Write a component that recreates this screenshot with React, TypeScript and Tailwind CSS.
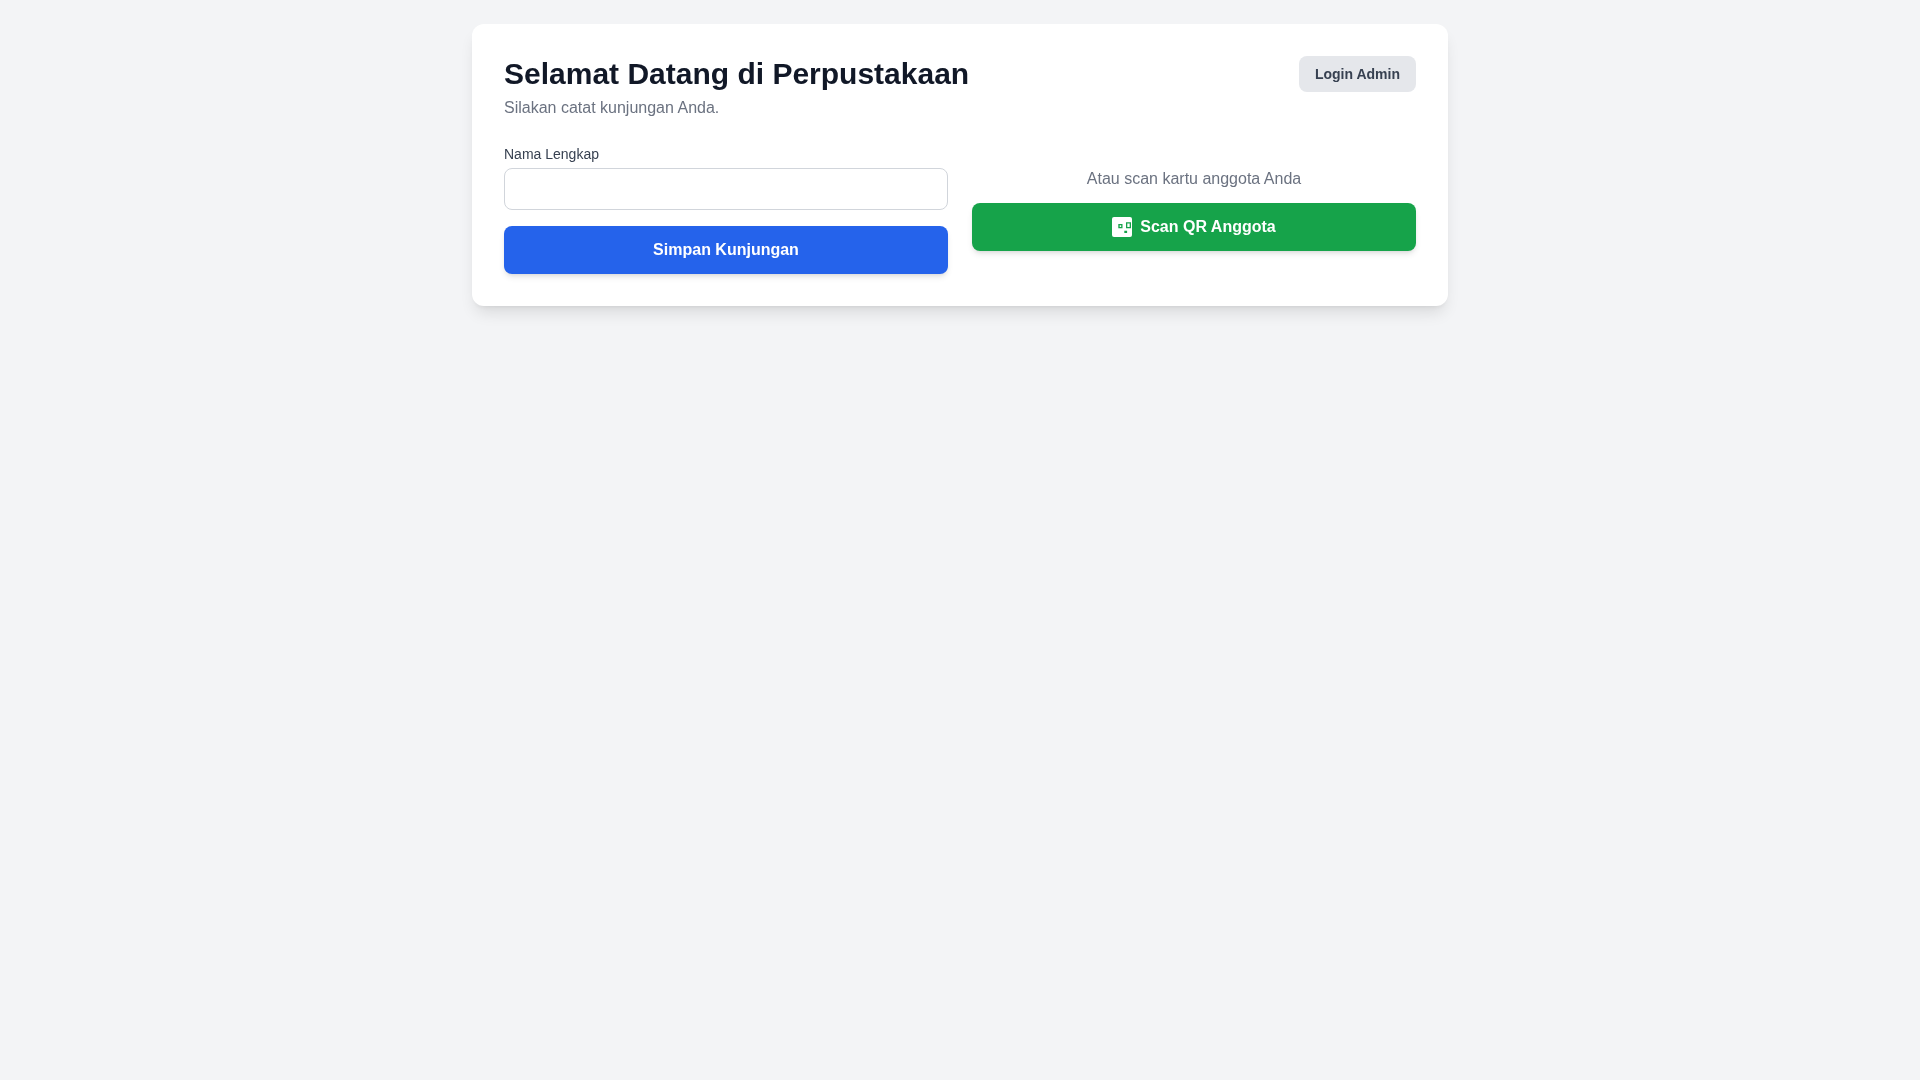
export default function App() {
  return (
    <div className="min-h-screen bg-[#f3f4f6] font-['Liberation_Sans',Arial,sans-serif]">
      <div className="max-w-5xl mx-auto p-6">
        <div className="bg-white rounded-xl shadow-lg p-8 transform-gpu">
          <div className="flex justify-between items-start mb-6">
            <div>
              <h1 className="text-3xl font-bold text-[#111827]">Selamat Datang di Perpustakaan</h1>
              <p className="mt-1 text-[#6b7280]">Silakan catat kunjungan Anda.</p>
            </div>
            <button className="bg-[#e5e7eb] text-[#374151] text-sm font-semibold px-4 py-2 rounded-lg">Login Admin</button>
          </div>
          <div className="grid grid-cols-2 gap-6 items-center">
            <div className="flex flex-col gap-4">
              <div>
                <label className="block text-sm font-medium text-[#374151] mb-1">Nama Lengkap</label>
                <input type="text" className="w-full border border-[#d1d5db] rounded-lg px-3 py-2 outline-none" />
              </div>
              <button className="w-full bg-[#2563eb] text-white font-bold py-3 rounded-lg shadow-md">Simpan Kunjungan</button>
            </div>
            <div className="text-center">
              <p className="text-[#6b7280] mb-3">Atau scan kartu anggota Anda</p>
              <button className="w-full bg-[#16a34a] text-white font-bold py-3 rounded-lg shadow-md flex items-center justify-center gap-2">
                <svg className="w-5 h-5" viewBox="0 0 20 20">
                  <rect width="20" height="20" rx="2" fill="#fff" />
                  <path fill="#16a34a" fillRule="evenodd" d="M6.3 7h4.2v4.3H6.3zM7.7 8.3v1.7h1.5V8.3zM14 5.3h5v6h-5zM15.3 6.6v3.4h2.4V6.6zM12.3 13.7h2.8V16h-2.8z" />
                </svg>
                <span>Scan QR Anggota</span>
              </button>
            </div>
          </div>
        </div>
      </div>
    </div>
  );
}
